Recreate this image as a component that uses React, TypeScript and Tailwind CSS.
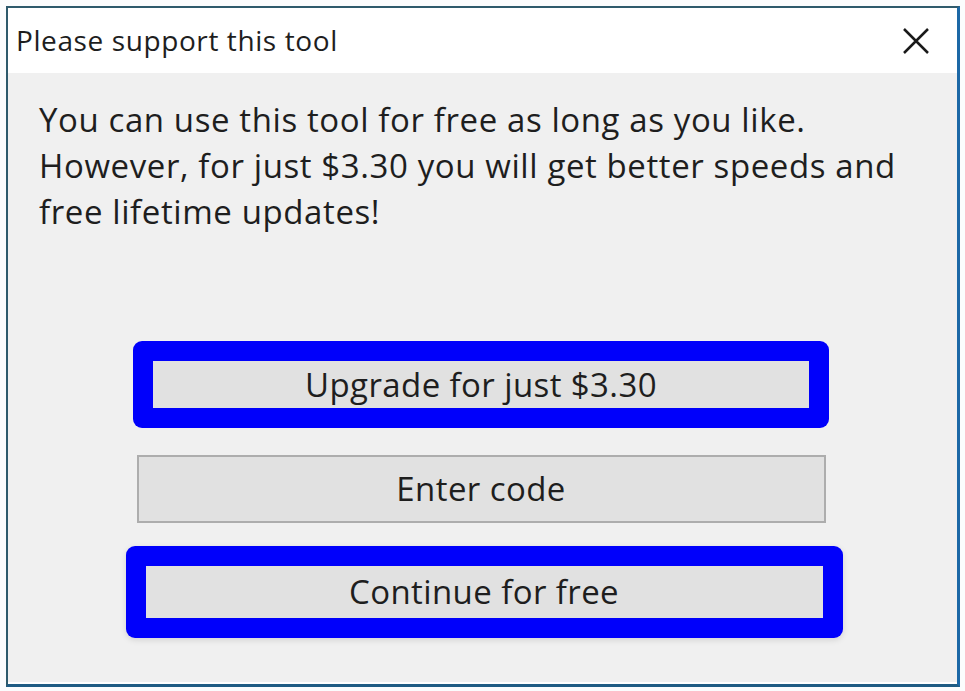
export default function App() {
  return (
    <div className="w-[965px] h-[691px] bg-[#fbfcfd] pt-[6px] pl-[6px] font-['Open_Sans',sans-serif] text-[#1e1e1e]">
      <div className="w-[954px] h-[681px] flex flex-col border-l-2 border-t-2 border-r-[3px] border-b-[3px] border-l-[#2e5a6c] border-t-[#2e5a6c] border-r-[#1c68a6] border-b-[#1f5c84]">
        {/* title bar */}
        <div className="h-[65px] shrink-0 bg-white flex items-center justify-between pl-[8px] pr-[28px]">
          <span className="text-[28px] tracking-[0.6px] leading-none -mt-[2px]">Please support this tool</span>
          <svg width="26" height="26" viewBox="0 0 26 26" className="text-[#1a1a1a]">
            <path d="M1 1 L25 25 M25 1 L1 25" stroke="currentColor" strokeWidth="2.5" fill="none" />
          </svg>
        </div>

        {/* body */}
        <div className="flex-1 bg-[#f0f0f0] flex flex-col border-b-2 border-white">
          <p className="pl-[31px] pt-[24px] text-[33px] leading-[46px] tracking-[0.6px]">
            You can use this tool for free as long as you like.
            <br />
            However, for just $3.30 you will get better speeds and
            <br />
            free lifetime updates!
          </p>

          <div className="flex flex-col items-center mt-[106px] pr-[3px]">
            <div className="w-[696px] h-[87px] rounded-[9px] bg-[#0000fb] p-[20px]">
              <button className="w-full h-full bg-[#e1e1e1] text-[33px] tracking-[0.4px] flex items-center justify-center">
                Upgrade for just $3.30
              </button>
            </div>

            <button className="mt-[27px] w-[689px] h-[68px] bg-[#e1e1e1] border-2 border-[#adadad] text-[33px] tracking-[0.4px] flex items-center justify-center">
              Enter code
            </button>

            <div className="mt-[23px] ml-[6px] w-[717px] h-[92px] rounded-[9px] bg-[#0000fb] px-[20px] py-[20px] shadow-[0_2px_6px_rgba(0,0,0,0.12)]">
              <button className="w-full h-full bg-[#e1e1e1] text-[33px] tracking-[0.4px] flex items-center justify-center">
                Continue for free
              </button>
            </div>
          </div>
        </div>
      </div>
    </div>
  );
}
